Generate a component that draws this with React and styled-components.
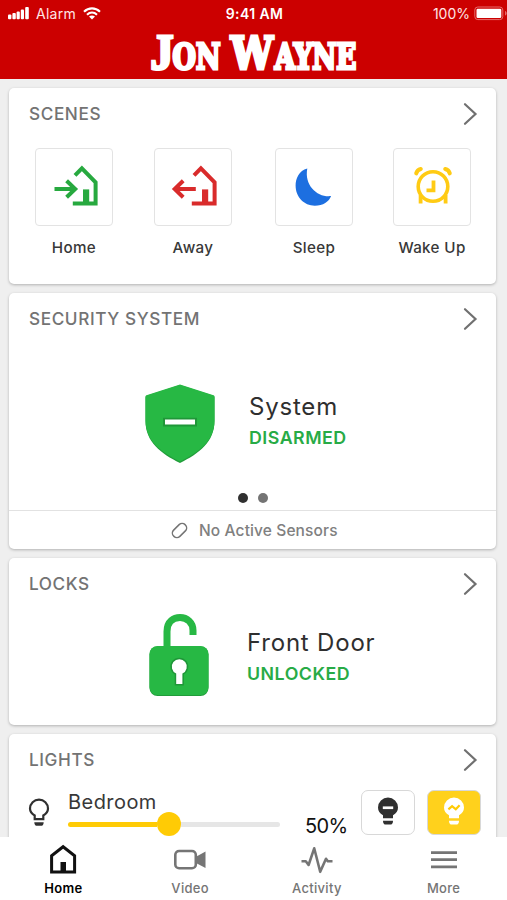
import React from "react";
import styled, { createGlobalStyle } from "styled-components";

const GlobalStyle = createGlobalStyle`
  * {
    box-sizing: border-box;
  }
  body {
    margin: 0;
    background: #efefef;
    font-family: Inter, "Liberation Sans", sans-serif;
  }
`;

const Screen = styled.div`
  display: flex;
  flex-direction: column;
  width: 507px;
  height: 900px;
  overflow: hidden;
  background: #efefef;
`;

const Header = styled.header`
  display: flex;
  flex-direction: column;
  flex: none;
  height: 79px;
  background: #cc0000;
  color: #fff;
  overflow: hidden;
`;

const StatusBar = styled.div`
  display: grid;
  grid-template-columns: 1fr auto 1fr;
  align-items: center;
  flex: none;
  height: 27px;
  font-size: 14px;
  color: #ffe5e5;
`;

const StatusGroup = styled.div`
  display: flex;
  align-items: center;
  justify-content: ${(props) => (props.$end ? "flex-end" : "flex-start")};
  gap: ${(props) => (props.$end ? "4px" : "7px")};
  padding-left: ${(props) => (props.$end ? "0" : "8px")};
  letter-spacing: ${(props) => (props.$end ? "0" : "0.25px")};
  svg {
    flex: none;
  }
`;

const Clock = styled.div`
  font-size: 14px;
  font-weight: 600;
  letter-spacing: 0.4px;
  color: #fff;
  padding-left: 2px;
`;

const Logo = styled.h1`
  display: flex;
  align-items: baseline;
  justify-content: flex-start;
  margin: -1px 0 0;
  padding-left: 151px;
  height: 52px;
  font-family: "DejaVu Serif Condensed", "DejaVu Serif", serif;
  font-weight: 700;
  line-height: 52px;
`;

const Letter = styled.span`
  display: flex;
  justify-content: center;
  width: ${(props) => props.$width}px;
  margin-right: ${(props) => props.$after || 0}px;
  font-family: ${(props) => (props.$hook ? '"Liberation Serif", serif' : "inherit")};
  font-size: ${(props) => props.$size || 35.5}px;
  transform: scaleX(${(props) => props.$scale || 1});
  -webkit-text-stroke: 3px #fff;
`;

const Content = styled.main`
  display: flex;
  flex-direction: column;
  flex: 1;
  min-height: 0;
  overflow: hidden;
  gap: 9px;
  padding: 9px 11px 0 9px;
`;

const Card = styled.section`
  display: flex;
  flex-direction: column;
  flex: none;
  height: ${(props) => props.$height}px;
  border-radius: 5px;
  background: #fff;
  box-shadow: 0 1px 3px rgba(0, 0, 0, 0.26);
`;

const CardHeader = styled.div`
  display: flex;
  align-items: center;
  justify-content: space-between;
  flex: none;
  height: 51px;
  padding: 0 18px 0 20px;
`;

const CardTitle = styled.h2`
  margin: 0;
  color: #737373;
  font-size: 17.2px;
  font-weight: 500;
  line-height: 21px;
  letter-spacing: 0.6px;
`;

const SceneList = styled.div`
  display: grid;
  grid-template-columns: 119px 121px 118px 78px;
  padding: 9px 0 0 26px;
`;

const Scene = styled.div`
  display: flex;
  flex-direction: column;
  align-items: center;
  width: 78px;
  gap: 12px;
`;

const SceneTile = styled.div`
  display: flex;
  width: 78px;
  height: 78px;
  border: 1px solid #e3e3e3;
  border-radius: 4px;
  svg {
    display: block;
  }
`;

const SceneName = styled.div`
  font-size: 15.2px;
  font-weight: 500;
  line-height: 20px;
  letter-spacing: 0.35px;
  white-space: nowrap;
  color: #383838;
`;

const StatusRow = styled.div`
  display: flex;
  align-items: flex-start;
  padding: ${(props) => props.$padding};
  gap: ${(props) => props.$gap}px;
  svg {
    flex: none;
  }
`;

const DeviceText = styled.div`
  padding-top: ${(props) => props.$top}px;
`;

const DeviceName = styled.div`
  font-size: 24px;
  line-height: 30px;
  letter-spacing: 0.8px;
  color: #2f2f2f;
`;

const DeviceState = styled.div`
  margin-top: 5px;
  font-size: 17.8px;
  font-weight: 600;
  line-height: 22px;
  letter-spacing: 0.5px;
  color: #28ab46;
`;

const Dots = styled.div`
  display: flex;
  justify-content: center;
  gap: 10px;
  margin-top: auto;
  padding-bottom: 7px;
`;

const Dot = styled.span`
  width: 10px;
  height: 10px;
  border-radius: 50%;
  background: ${(props) => (props.$active ? "#303030" : "#747474")};
`;

const SensorBar = styled.div`
  display: flex;
  align-items: center;
  flex: none;
  gap: 11px;
  height: 39px;
  padding-left: 162px;
  border-top: 1px solid #e2e2e2;
  color: #808080;
  font-size: 15.5px;
  font-weight: 500;
  letter-spacing: 0.12px;
`;

const LightRow = styled.div`
  display: flex;
  align-items: flex-start;
  padding-left: 19px;
`;

const BulbSlot = styled.div`
  width: 40px;
  height: 52px;
  padding-top: 13px;
`;

const LightControl = styled.div`
  width: 212px;
  margin-right: 25px;
`;

const LightName = styled.div`
  padding-top: 4px;
  font-size: 20px;
  line-height: 27px;
  letter-spacing: 0.45px;
  color: #383838;
`;

const Slider = styled.div`
  display: flex;
  align-items: center;
  height: 24px;
  margin-top: -4px;
`;

const Track = styled.div`
  flex: ${(props) => (props.$filled ? "none" : 1)};
  width: ${(props) => (props.$filled ? "89px" : "auto")};
  height: 5px;
  border-radius: ${(props) => (props.$filled ? "3px 0 0 3px" : "0 3px 3px 0")};
  background: ${(props) => (props.$filled ? "#ffcb05" : "#e6e6e6")};
`;

const Thumb = styled.div`
  width: 24px;
  height: 24px;
  border-radius: 50%;
  background: #ffcb05;
`;

const Percent = styled.div`
  width: 56px;
  padding-top: 28px;
  font-size: 20px;
  line-height: 27px;
  letter-spacing: -0.6px;
  color: #111;
`;

const LightButton = styled.button`
  display: flex;
  align-items: flex-start;
  justify-content: center;
  width: 54px;
  height: 45px;
  margin: 5px 12px 0 0;
  padding: 6px 0 0;
  border: 1.5px solid #d8d8d8;
  border-radius: 7px;
  background: ${(props) => (props.$on ? "#ffd11c" : "#fff")};
`;

const TabBar = styled.nav`
  display: grid;
  grid-template-columns: repeat(4, 1fr);
  flex: none;
  height: 63px;
  background: #fff;
  padding-top: 5px;
`;

const Tab = styled.div`
  display: flex;
  flex-direction: column;
  align-items: center;
  gap: 5px;
  color: ${(props) => (props.$active ? "#000" : "#757575")};
  font-size: 13px;
  font-weight: ${(props) => (props.$active ? 600 : 500)};
  line-height: 18px;
  letter-spacing: 0.3px;
`;

const Chevron = () => (
  <svg width="15" height="24" viewBox="0 0 15 24" fill="none" stroke="#707070" strokeWidth="2.2">
    <path d="M2 2.2 12.5 12 2 21.8" strokeLinecap="round" strokeLinejoin="miter" />
  </svg>
);

const CellularIcon = () => (
  <svg width="21" height="13" viewBox="0 0 21 13" fill="#fff">
    <rect x="0" y="7.6" width="3.4" height="4.6" rx="1" />
    <rect x="4.4" y="6" width="3.4" height="6.2" rx="1" />
    <rect x="8.6" y="4.4" width="3.2" height="7.8" rx="1" />
    <rect x="12.8" y="2.4" width="3.2" height="9.8" rx="1" />
    <rect x="17.2" y="0" width="3.6" height="12.2" rx="1" />
  </svg>
);

const WifiIcon = () => (
  <svg width="18" height="13" viewBox="0 0 18 13" fill="none" stroke="#fff" strokeWidth="2.1">
    <path d="M1 4.7C5.6.2 12.4.2 17 4.7" />
    <path d="M4 7.7c3-2.8 7-2.8 10 0" />
    <path d="m9 12.5-3-3c1.8-1.5 4.2-1.5 6 0z" fill="#fff" stroke="none" />
  </svg>
);

const BatteryIcon = () => (
  <svg width="33" height="15" viewBox="0 0 33 15">
    <rect x=".8" y="1" width="28" height="12.6" rx="3" fill="none" stroke="#e66a6a" />
    <rect x="2.5" y="2.7" width="24.8" height="9.2" rx="1.2" fill="#fff" />
    <path d="M31 5v4.6c2.2-.7 2.2-3.9 0-4.6z" fill="#e66a6a" />
  </svg>
);

const HomeScene = ({ color, away }) => (
  <svg width="76" height="76" viewBox="0 0 76 76" fill="none" stroke={color} strokeWidth="4">
    <path d="M39 26.4 45.9 19.3 59.6 33.4V54.4H36.8" />
    <path d="M47 40.4h6.2v14H47z" fill={color} stroke="none" />
    {away ? (
      <path d="M40.8 40H19.5M28.2 31.7 19.7 40l8.5 8.3" />
    ) : (
      <path d="M18.5 40h20.7M30.6 31.7 39.2 40l-8.6 8.3" />
    )}
  </svg>
);

const MoonIcon = () => (
  <svg width="76" height="76" viewBox="0 0 76 76" fill="#1d6fe0">
    <path d="M31.3 19.4C23 21.6 19.6 29.5 19.6 36.5c0 11.5 8.5 20.2 19.2 20.2 8.3 0 14.2-4 16.3-9.7-12.8 1.7-27.2-9.8-23.8-27.6z" />
  </svg>
);

const AlarmIcon = () => (
  <svg width="76" height="76" viewBox="0 0 76 76" fill="none" stroke="#ffcb14" strokeWidth="3.6">
    <circle cx="39" cy="37.5" r="14.8" />
    <path d="M39.5 31.5V41.4H32.5" strokeWidth="3.8" />
    <path d="M26.6 46V54.4M51.6 46V54.4" strokeWidth="3.8" />
    <path
      d="M22.2 24.4c.6-2.2 2.2-3.8 4.6-4.4M55.8 24.4c-.6-2.2-2.2-3.8-4.6-4.4"
      strokeWidth="4"
      strokeLinecap="round"
    />
  </svg>
);

const ShieldIcon = () => (
  <svg width="70" height="80" viewBox="0 0 70 80">
    <path d="M35 1 68.5 11.7Q69.5 12 69.5 13.5V37C69.5 58 54 69.5 35 79 16 69.5.5 58 .5 37V13.5Q.5 12 1.5 11.7z" fill="#219c3a" />
    <path d="M35 .6 68.5 11.3Q69.5 11.6 69.5 13.1V36.5C69.5 57 54 68 35 77.6 16 68 .5 57 .5 36.5V13.1Q.5 11.6 1.5 11.3z" fill="#27b844" />
    <path d="M18 33.8h34v8.6H18z" fill="#1f9738" />
    <path d="M20 35.5h30v5H20z" fill="#fff" />
  </svg>
);

const UnlockedIcon = () => (
  <svg width="60" height="84" viewBox="0 0 60 84">
    <path d="M18 36V18.5C18 8 25 4.5 31 4.5c7 0 13 5 13 13v4.5" fill="none" stroke="#27b844" strokeWidth="7" />
    <rect x=".5" y="33.5" width="59" height="49.5" rx="8" fill="#219c3a" />
    <rect x=".5" y="33" width="59" height="49" rx="8" fill="#27b844" />
    <g fill="#fff" stroke="#1f9738" strokeWidth="3" paintOrder="stroke">
      <path d="M27.2 60.5a7.5 7.5 0 1 1 6.2 0V71h-6.2z" />
    </g>
  </svg>
);

const SensorIcon = () => (
  <svg width="17" height="17" viewBox="0 0 17 17" fill="none" stroke="#757575" strokeWidth="1.5">
    <rect x=".4" y="4.1" width="16.2" height="8.8" rx="4.2" transform="rotate(-45 8.5 8.5)" />
  </svg>
);

const BulbOutline = () => (
  <svg width="22" height="29" viewBox="0 0 22 29" fill="none" stroke="#303030" strokeWidth="2.2">
    <path d="M6.7 21.2v-3.7C3.3 15.6 2 13.4 2 10.6a9 9 0 0 1 18 0c0 2.8-1.3 5-4.7 6.9v3.7z" />
    <path d="M6.3 24.2h9.4c0 2.5-1.2 3.6-2.7 3.6H9c-1.5 0-2.7-1.1-2.7-3.6z" fill="#303030" stroke="none" />
  </svg>
);

const BulbSolid = ({ color, on }) => (
  <svg width="22" height="30" viewBox="0 0 22 30" fill={color}>
    <path d="M6 21.3v-3C2.8 16.8 1 14 1 10.6a10 10 0 0 1 20 0c0 3.4-1.8 6.2-5 7.7v3z" />
    <path d="M6 23.7h10c0 2.6-1.2 3.9-2.8 3.9H8.8C7.2 27.6 6 26.3 6 23.7z" />
    {on ? (
      <path d="m5.4 12.4 3.7-3.3 3.7 3.2 3.8-4" fill="none" stroke="#ffcb05" strokeWidth="2.2" />
    ) : (
      <path d="M5.8 9.4h10.4v2.7H5.8z" fill="#fff" />
    )}
  </svg>
);

const HomeTabIcon = () => (
  <svg width="32" height="32" viewBox="0 0 32 32" fill="none" stroke="#111" strokeWidth="3">
    <path d="M4.6 30V13.7L16.1 4.7 27.6 13.7V30z" />
    <path d="M13.5 20h5.5v10h-5.5z" fill="#111" stroke="none" />
  </svg>
);

const VideoTabIcon = () => (
  <svg width="32" height="32" viewBox="0 0 32 32" fill="none" stroke="#757575" strokeWidth="2.6">
    <rect x="1.3" y="9" width="20.5" height="17.2" rx="3.8" />
    <path d="M22 14.7 31.5 9.5V26l-9.5-5z" fill="#757575" stroke="none" />
  </svg>
);

const ActivityTabIcon = () => (
  <svg width="32" height="32" viewBox="0 0 32 32" fill="none" stroke="#757575" strokeWidth="2.6">
    <path d="M.5 19.2h4.3l2.8 3.8L13.2 6.3l6 23.5L25 16.8l1.8 2.4h4.7" strokeLinejoin="round" />
  </svg>
);

const MoreTabIcon = () => (
  <svg width="32" height="32" viewBox="0 0 32 32" fill="none" stroke="#757575" strokeWidth="2.7">
    <path d="M3 10.7h26M3 17.7h26M3 24.9h26" />
  </svg>
);

const scenes = [
  { name: "Home", icon: <HomeScene color="#27a93f" /> },
  { name: "Away", icon: <HomeScene color="#d92b2b" away /> },
  { name: "Sleep", icon: <MoonIcon /> },
  { name: "Wake Up", icon: <AlarmIcon /> },
];

const tabs = [
  { name: "Home", icon: <HomeTabIcon />, active: true },
  { name: "Video", icon: <VideoTabIcon /> },
  { name: "Activity", icon: <ActivityTabIcon /> },
  { name: "More", icon: <MoreTabIcon /> },
];

function CardHead({ title }) {
  return (
    <CardHeader>
      <CardTitle>{title}</CardTitle>
      <Chevron />
    </CardHeader>
  );
}

function App() {
  return (
    <Screen>
      <GlobalStyle />
      <Header>
        <StatusBar>
          <StatusGroup>
            <CellularIcon />
            <span>Alarm</span>
            <WifiIcon />
          </StatusGroup>
          <Clock>9:41 AM</Clock>
          <StatusGroup $end>
            <span>100%</span>
            <BatteryIcon />
          </StatusGroup>
        </StatusBar>
        <Logo>
          <Letter $width={22} $size={50} $scale={0.92} $hook>J</Letter>
          <Letter $width={47} $scale={0.84} $after={10}>ON</Letter>
          <Letter $width={44} $size={45} $scale={0.93}>W</Letter>
          <Letter $width={83} $scale={0.82}>AYNE</Letter>
        </Logo>
      </Header>

      <Content>
        <Card $height={196}>
          <CardHead title="SCENES" />
          <SceneList>
            {scenes.map((scene) => (
              <Scene key={scene.name}>
                <SceneTile>{scene.icon}</SceneTile>
                <SceneName>{scene.name}</SceneName>
              </Scene>
            ))}
          </SceneList>
        </Card>

        <Card $height={256}>
          <CardHead title="SECURITY SYSTEM" />
          <StatusRow $padding="40px 0 0 136px" $gap={34}>
            <ShieldIcon />
            <DeviceText $top={8}>
              <DeviceName>System</DeviceName>
              <DeviceState>DISARMED</DeviceState>
            </DeviceText>
          </StatusRow>
          <Dots>
            <Dot $active />
            <Dot />
          </Dots>
          <SensorBar>
            <SensorIcon />
            <span>No Active Sensors</span>
          </SensorBar>
        </Card>

        <Card $height={167}>
          <CardHead title="LOCKS" />
          <StatusRow $padding="4px 0 0 140px" $gap={38}>
            <UnlockedIcon />
            <DeviceText $top={15}>
              <DeviceName>Front Door</DeviceName>
              <DeviceState>UNLOCKED</DeviceState>
            </DeviceText>
          </StatusRow>
        </Card>

        <Card $height={167}>
          <CardHead title="LIGHTS" />
          <LightRow>
            <BulbSlot>
              <BulbOutline />
            </BulbSlot>
            <LightControl>
              <LightName>Bedroom</LightName>
              <Slider>
                <Track $filled />
                <Thumb />
                <Track />
              </Slider>
            </LightControl>
            <Percent>50%</Percent>
            <LightButton>
              <BulbSolid color="#303030" />
            </LightButton>
            <LightButton $on>
              <BulbSolid color="#fff" on />
            </LightButton>
          </LightRow>
        </Card>
      </Content>

      <TabBar>
        {tabs.map((tab) => (
          <Tab key={tab.name} $active={tab.active}>
            {tab.icon}
            <span>{tab.name}</span>
          </Tab>
        ))}
      </TabBar>
    </Screen>
  );
}

export default App;
